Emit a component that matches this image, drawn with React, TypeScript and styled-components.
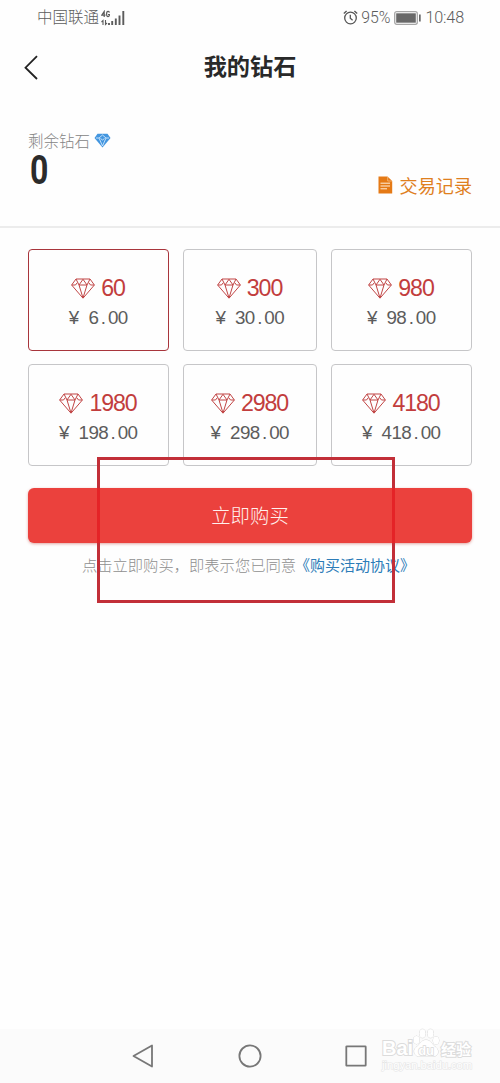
import React from 'react';
import styled, { createGlobalStyle } from 'styled-components';

const Global = createGlobalStyle`
  * { box-sizing: border-box; }
  body { margin: 0; background: #fefefe; }
`;

const Screen = styled.div`
  position: relative;
  display: flex;
  flex-direction: column;
  width: 500px;
  height: 1083px;
  overflow: hidden;
  background: #fefefe;
  font-family: Roboto, "Noto Sans CJK SC", sans-serif;
  color: #2b2b2b;
  white-space: nowrap;
`;

const StatusBar = styled.div`
  display: flex;
  justify-content: space-between;
  align-items: center;
  height: 34px;
  padding: 1px 36px 0 37px;
  font-size: 15.5px;
  line-height: 20px;
  color: #5c5c5c;
`;

const StatusGroup = styled.div`
  display: flex;
  align-items: center;
`;

const Carrier = styled.span`
  margin-right: 2px;
  font-weight: 300;
`;

const Percent = styled.span`
  margin: 0 4px 0 3px;
  font-size: 15.8px;
  font-weight: 300;
`;

const Clock = styled.span`
  margin-left: 4px;
  font-size: 16.2px;
  font-weight: 300;
  letter-spacing: -0.15px;
`;

const Header = styled.header`
  display: grid;
  grid-template-columns: 50px 1fr 50px;
  align-items: center;
  height: 66px;

  svg { margin-left: 23px; }
`;

const Title = styled.h1`
  margin: 0;
  text-align: center;
  font-size: 23.2px;
  line-height: 34px;
  font-weight: 700;
  color: #292929;
`;

const Balance = styled.section`
  display: flex;
  justify-content: space-between;
  height: 128px;
  padding: 29px 28px 0;
  border-bottom: 2px solid #ececec;
`;

const BalanceLabel = styled.div`
  display: flex;
  align-items: center;
  gap: 4px;
  height: 22px;
  font-size: 15.5px;
  font-weight: 300;
  color: #858585;
`;

const Amount = styled.div`
  margin-left: 2px;
  font-size: 40px;
  line-height: 40px;
  font-weight: 700;
  transform: scaleX(0.8);
  transform-origin: left;
`;

const History = styled.a`
  display: flex;
  align-items: center;
  gap: 7px;
  height: 28px;
  margin-top: 42px;
  font-size: 18.1px;
  color: #df801f;
`;

const Packages = styled.section`
  display: grid;
  grid-template-columns: 141px 134px 141px;
  grid-auto-rows: 101.5px;
  gap: 13.5px 14px;
  padding: 21px 28px 0;
`;

const Card = styled.div<{ $selected?: boolean }>`
  display: flex;
  flex-direction: column;
  align-items: center;
  padding-top: 23px;
  border: 1px solid ${(p) => (p.$selected ? '#a8353c' : '#c6c6c8')};
  border-radius: 4px;
`;

const Count = styled.div`
  display: flex;
  align-items: center;
  gap: 6px;
  height: 30px;
  padding-right: 1px;
  font: 400 23.2px/30px "Liberation Sans", sans-serif;
  letter-spacing: -1.1px;
  color: #c23d3d;
`;

const Price = styled.div`
  display: flex;
  height: 30px;
  font: 400 18.8px/30px "Liberation Sans", sans-serif;
  color: #5c5c5c;
`;

const Cell = styled.span`
  display: flex;
  justify-content: center;
  width: 9.8px;
`;

const BuyButton = styled.button`
  height: 55px;
  margin: 22.5px 28px 0;
  padding: 0 0 2px;
  border: 0;
  border-radius: 6px;
  background: #eb413d;
  box-shadow: 0 1px 3px rgba(190, 60, 50, 0.45);
  color: #fff1ee;
  font: 300 19.4px/53px "Noto Sans CJK SC", sans-serif;
`;

const Agreement = styled.p`
  margin: 11px 0 0;
  padding-right: 3px;
  text-align: center;
  font-size: 15.3px;
  line-height: 24px;
  font-weight: 300;
  color: #8f8f8f;
`;

const AgreementLink = styled.a`
  margin-left: -1px;
  font-size: 15px;
  font-weight: 400;
  color: #2c7cb8;
`;

const Highlight = styled.div`
  position: absolute;
  left: 97px;
  top: 457px;
  width: 298px;
  height: 146px;
  border: 3px solid #c22f38;
  border-image: linear-gradient(#c22f38 31px, #e52327 31px, #e52327 86px, #c22f38 86px) 3;
`;

const NavBar = styled.nav`
  display: flex;
  justify-content: space-between;
  align-items: center;
  height: 54px;
  margin-top: auto;
  padding: 0 133px 0 132px;
  background: #fbfbfb;
`;

const Watermark = styled.div`
  position: absolute;
  left: 382px;
  top: 1028px;
  width: 92px;
  height: 46px;
  color: #fff;
  font-family: "Liberation Sans", "Noto Sans CJK SC", sans-serif;
  paint-order: stroke fill;
  -webkit-text-stroke: 2px #dcdcdc;
`;

const Brand = styled.div`
  position: relative;
  display: flex;
  align-items: center;
  height: 28px;
  margin-top: 6px;
  font-size: 20px;
  font-weight: 700;
`;

const BrandPaw = styled.span`
  margin: 4px 0 0 5px;
  font-size: 13px;
  -webkit-text-stroke: 1.4px #d8d8d8;
`;

const BrandName = styled.span`
  margin-left: 7px;
  font-size: 15px;
`;

const Site = styled.div`
  margin-top: -3px;
  font-size: 11.3px;
  line-height: 12px;
  letter-spacing: -0.05px;
  -webkit-text-stroke: 1.2px #e6e6e6;
`;

const Paw = styled.svg`
  position: absolute;
  left: 30px;
  top: 0;
`;

const Signal = () => (
  <svg width="24" height="16" viewBox="0 0 24 16" fill="none" stroke="#5c5c5c">
    <path d="M3.2 7V1.5L0.8 5.2H4.5M8.5 2.4Q8 1.3 7 1.3Q5.6 1.3 5.6 4T7 6.7Q8.4 6.7 8.4 4.5H7" strokeWidth="1.2" />
    <path d="M2 15V10.5L0.5 12M4.5 10V14.5L6 13" strokeWidth="1.1" />
    <path d="M8 13v2M11.2 11v4M14.8 8.5V15M18.5 5.5V15M22.3 1V15" strokeWidth="1.9" />
  </svg>
);

const Alarm = () => (
  <svg width="15" height="15" viewBox="0 0 15 15" fill="none" stroke="#555" strokeWidth="1.3">
    <circle cx="7.5" cy="8" r="5.8" />
    <path d="M7.3 4.7V8.3L9.6 10.2M0.8 3.6L3.6 1M14.2 3.6L11.4 1" />
  </svg>
);

const Battery = () => (
  <svg width="27" height="14" viewBox="0 0 27 14">
    <rect x="0.7" y="0.7" width="22.6" height="12.6" rx="2" fill="none" stroke="#a6a6a6" strokeWidth="1.3" />
    <rect x="2.2" y="2.3" width="19.6" height="9.4" fill="#686868" />
    <rect x="25" y="3.5" width="1.7" height="7" fill="#686868" />
  </svg>
);

const BackArrow = () => (
  <svg width="16" height="25" viewBox="0 0 16 25" fill="none" stroke="#222" strokeWidth="1.8">
    <path d="M14 1.2L2.5 12.7L14 24" />
  </svg>
);

const BlueGem = () => (
  <svg width="17" height="15" viewBox="0 0 17 15">
    <path d="M3.5 0.8H13.5L16.5 5L8.5 14.5L0.5 5Z" fill="#4396df" />
    <path d="M2 5H5L8.5 2L12 5H15M5 5L8.5 13M12 5L8.5 13M6.5 5.5L8.5 7L10.5 5.5" fill="none" stroke="#dff0ff" strokeWidth="0.8" />
  </svg>
);

const Doc = () => (
  <svg width="15" height="18" viewBox="0 0 15 18">
    <path d="M0.5 0.5H9.5L14.2 5V17.5H0.5Z" fill="#e57a16" />
    <path d="M9.7 1V5H14" fill="none" stroke="#f6c48f" strokeWidth="0.7" />
    <path d="M2.5 7.2H12M2.5 10H12M2.5 12.8H9" stroke="#fff0dd" strokeWidth="1" />
  </svg>
);

const Gem = () => (
  <svg width="24" height="21" viewBox="0 0 24 21" fill="none" stroke="#c14545" strokeWidth="1" strokeLinejoin="round">
    <path d="M5 1H19L23.4 7L12 20.2L0.6 7Z" />
    <path d="M5 1L8 7L12 1.3L16 7L19 1M8 7L12 20L16 7M0.8 7H4.5M8 7H16M19.5 7H23.2M4.5 7L6.2 4.8M19.5 7L17.8 4.8" />
  </svg>
);

const packages = [
  { count: '60', price: '6.00' },
  { count: '300', price: '30.00' },
  { count: '980', price: '98.00' },
  { count: '1980', price: '198.00' },
  { count: '2980', price: '298.00' },
  { count: '4180', price: '418.00' },
];

export default function App() {
  return (
    <Screen>
      <Global />
      <StatusBar>
        <StatusGroup><Carrier>中国联通</Carrier><Signal /></StatusGroup>
        <StatusGroup><Alarm /><Percent>95%</Percent><Battery /><Clock>10:48</Clock></StatusGroup>
      </StatusBar>
      <Header><BackArrow /><Title>我的钻石</Title></Header>
      <Balance>
        <div>
          <BalanceLabel>剩余钻石<BlueGem /></BalanceLabel>
          <Amount>0</Amount>
        </div>
        <History><Doc />交易记录</History>
      </Balance>
      <Packages>
        {packages.map((item, index) => (
          <Card key={item.count} $selected={index === 0}>
            <Count><Gem />{item.count}</Count>
            <Price>{`¥ ${item.price}`.split('').map((char, i) => <Cell key={i}>{char}</Cell>)}</Price>
          </Card>
        ))}
      </Packages>
      <BuyButton>立即购买</BuyButton>
      <Agreement>点击立即购买，即表示您已同意<AgreementLink>《购买活动协议》</AgreementLink></Agreement>
      <Highlight />
      <NavBar>
        <svg width="22" height="24" viewBox="0 0 22 24" fill="none" stroke="#777" strokeWidth="1.8" strokeLinejoin="round"><path d="M20 1.5V22.5L1.5 12Z" /></svg>
        <svg width="24" height="24" viewBox="0 0 24 24" fill="none" stroke="#777" strokeWidth="1.8"><circle cx="12" cy="12" r="10.6" /></svg>
        <svg width="22" height="22" viewBox="0 0 22 22" fill="none" stroke="#777" strokeWidth="1.8"><rect x="1.3" y="1.3" width="19.4" height="19.4" rx="0.5" /></svg>
      </NavBar>
      <Watermark>
        <Paw width="28" height="30" viewBox="0 0 28 30" fill="#fff" stroke="#d8d8d8">
          <ellipse cx="4.5" cy="12" rx="3" ry="4" /><ellipse cx="10.5" cy="5.5" rx="3" ry="4.3" />
          <ellipse cx="18.5" cy="5.5" rx="3" ry="4.3" /><ellipse cx="24" cy="12.5" rx="3" ry="4" />
          <path d="M14 12C9 12 8 17 4 19.5C0 23 3 29 8 28.5H20C26 29 28 23 24 19.5C20 17 19 12 14 12Z" />
        </Paw>
        <Brand>Bai<BrandPaw>du</BrandPaw><BrandName>经验</BrandName></Brand>
        <Site>jingyan.baidu.com</Site>
      </Watermark>
    </Screen>
  );
}
